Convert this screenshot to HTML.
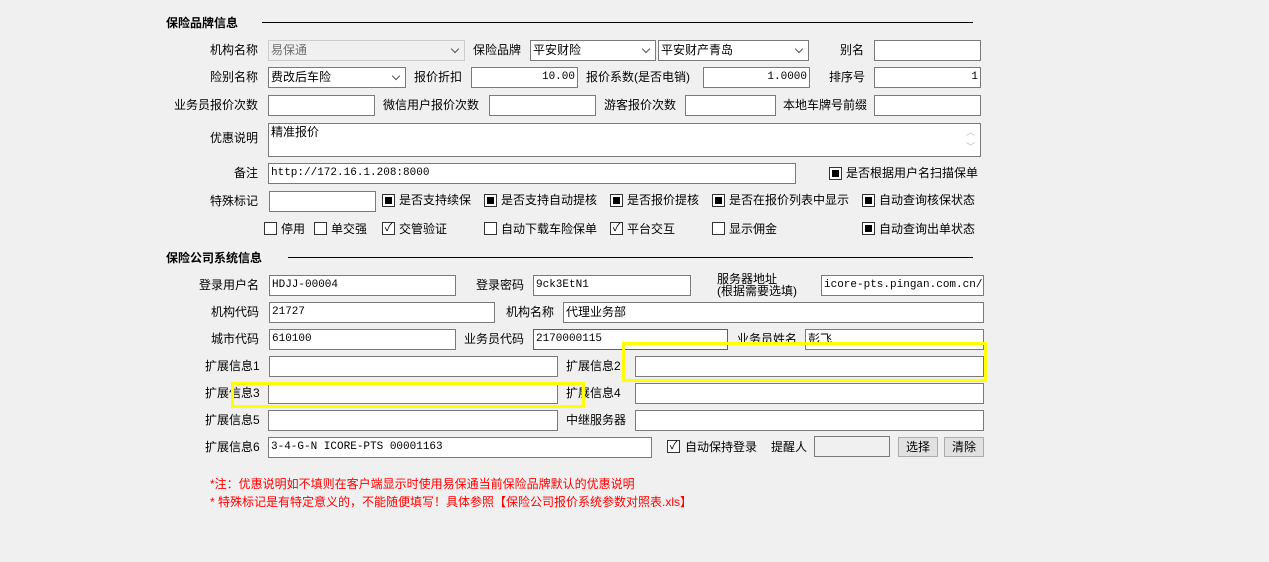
<!DOCTYPE html>
<html><head><meta charset="utf-8"><style>
body{margin:0;width:1269px;height:562px;background:#f0f0f0;position:relative;overflow:hidden;font-family:"Liberation Sans","Noto Sans CJK SC",sans-serif;font-size:12px;color:#000}
div{position:absolute;box-sizing:border-box}
.l{line-height:14px;white-space:nowrap}
.i{background:#fff;border:1px solid #7a7a7a;height:21px;font-family:"Liberation Mono","Noto Sans CJK SC",monospace;font-size:11px;line-height:19px;padding:0 2px;white-space:nowrap;overflow:hidden}
.r{text-align:right}
.h{font-weight:bold;font-size:12px;line-height:14px}
.hr{height:1px;background:#000}
.cb{width:13px;height:13px;border:1px solid #333;background:#fff}
.cb.f::after{content:"";position:absolute;left:2px;top:2px;width:7px;height:7px;background:#000}
.dd::after{content:"";position:absolute;right:6px;top:5px;width:5px;height:5px;border-right:1px solid #555;border-bottom:1px solid #555;transform:rotate(45deg)}
.y{border:3px solid #ffff00}
.btn{background:#e1e1e1;border:1px solid #adadad;height:20px;line-height:18px;text-align:center}
.red{color:#f00}
</style></head><body>
<div class="h" style="left:166px;top:16px">保险品牌信息</div>
<div class="hr" style="left:262px;top:22px;width:711px"></div>

<div class="l" style="left:210px;top:43px">机构名称</div>
<div class="i dd" style="left:268px;top:40px;width:197px;background:#f0f0f0;border-color:#ccc;color:#6d6d6d;font-family:'Liberation Sans','Noto Sans CJK SC',sans-serif;font-size:12px">易保通</div>
<div class="l" style="left:473px;top:43px">保险品牌</div>
<div class="i dd" style="left:530px;top:40px;width:126px;font-family:'Liberation Sans','Noto Sans CJK SC',sans-serif;font-size:12px">平安财险</div>
<div class="i dd" style="left:658px;top:40px;width:151px;font-family:'Liberation Sans','Noto Sans CJK SC',sans-serif;font-size:12px">平安财产青岛</div>
<div class="l" style="left:840px;top:43px">别名</div>
<div class="i" style="left:874px;top:40px;width:107px"></div>

<div class="l" style="left:210px;top:70px">险别名称</div>
<div class="i dd" style="left:268px;top:67px;width:138px;font-family:'Liberation Sans','Noto Sans CJK SC',sans-serif;font-size:12px">费改后车险</div>
<div class="l" style="left:414px;top:70px">报价折扣</div>
<div class="i r" style="left:471px;top:67px;width:107px">10.00</div>
<div class="l" style="left:586px;top:70px">报价系数(是否电销)</div>
<div class="i r" style="left:703px;top:67px;width:107px">1.0000</div>
<div class="l" style="left:829px;top:70px">排序号</div>
<div class="i r" style="left:874px;top:67px;width:107px">1</div>

<div class="l" style="left:174px;top:98px">业务员报价次数</div>
<div class="i" style="left:268px;top:95px;width:107px"></div>
<div class="l" style="left:383px;top:98px">微信用户报价次数</div>
<div class="i" style="left:489px;top:95px;width:107px"></div>
<div class="l" style="left:604px;top:98px">游客报价次数</div>
<div class="i" style="left:685px;top:95px;width:91px"></div>
<div class="l" style="left:783px;top:98px">本地车牌号前缀</div>
<div class="i" style="left:874px;top:95px;width:107px"></div>

<div class="l" style="left:210px;top:131px">优惠说明</div>
<div class="i" style="left:268px;top:123px;width:713px;height:34px;font-family:'Liberation Sans','Noto Sans CJK SC',sans-serif;font-size:12px;line-height:16px">精准报价</div>
<div class="l" style="left:966px;top:125px;color:#bbb;font-size:9px;line-height:15px">︿<br>﹀</div>

<div class="l" style="left:234px;top:166px">备注</div>
<div class="i" style="left:268px;top:163px;width:528px">http://172.16.1.208:8000</div>
<div class="cb f" style="left:829px;top:167px"></div>
<div class="l" style="left:846px;top:166px">是否根据用户名扫描保单</div>

<div class="l" style="left:210px;top:194px">特殊标记</div>
<div class="i" style="left:269px;top:191px;width:107px"></div>
<div class="cb f" style="left:382px;top:194px"></div><div class="l" style="left:399px;top:193px">是否支持续保</div>
<div class="cb f" style="left:484px;top:194px"></div><div class="l" style="left:501px;top:193px">是否支持自动提核</div>
<div class="cb f" style="left:610px;top:194px"></div><div class="l" style="left:627px;top:193px">是否报价提核</div>
<div class="cb f" style="left:712px;top:194px"></div><div class="l" style="left:729px;top:193px">是否在报价列表中显示</div>
<div class="cb f" style="left:862px;top:194px"></div><div class="l" style="left:879px;top:193px">自动查询核保状态</div>

<div class="cb" style="left:264px;top:222px"></div><div class="l" style="left:281px;top:222px">停用</div>
<div class="cb" style="left:314px;top:222px"></div><div class="l" style="left:331px;top:222px">单交强</div>
<div class="cb" style="left:382px;top:222px;font-size:11px;line-height:11px;text-align:center">✓</div><div class="l" style="left:399px;top:222px">交管验证</div>
<div class="cb" style="left:484px;top:222px"></div><div class="l" style="left:501px;top:222px">自动下载车险保单</div>
<div class="cb" style="left:610px;top:222px;font-size:11px;line-height:11px;text-align:center">✓</div><div class="l" style="left:627px;top:222px">平台交互</div>
<div class="cb" style="left:712px;top:222px"></div><div class="l" style="left:729px;top:222px">显示佣金</div>
<div class="cb f" style="left:862px;top:222px"></div><div class="l" style="left:879px;top:222px">自动查询出单状态</div>

<div class="h" style="left:166px;top:251px">保险公司系统信息</div>
<div class="hr" style="left:288px;top:257px;width:685px"></div>

<div class="l" style="left:199px;top:278px">登录用户名</div>
<div class="i" style="left:269px;top:275px;width:187px">HDJJ-00004</div>
<div class="l" style="left:476px;top:278px">登录密码</div>
<div class="i" style="left:533px;top:275px;width:158px">9ck3EtN1</div>
<div class="l" style="left:717px;top:273px;line-height:12px">服务器地址<br>(根据需要选填)</div>
<div class="i" style="left:821px;top:275px;width:163px">icore-pts.pingan.com.cn/ebusiness</div>

<div class="l" style="left:211px;top:305px">机构代码</div>
<div class="i" style="left:269px;top:302px;width:226px">21727</div>
<div class="l" style="left:506px;top:305px">机构名称</div>
<div class="i" style="left:563px;top:302px;width:421px;font-family:'Liberation Sans','Noto Sans CJK SC',sans-serif;font-size:12px">代理业务部</div>

<div class="l" style="left:211px;top:332px">城市代码</div>
<div class="i" style="left:269px;top:329px;width:187px">610100</div>
<div class="l" style="left:464px;top:332px">业务员代码</div>
<div class="i" style="left:533px;top:329px;width:195px;border-color:#0078d7">2170000115</div>
<div class="l" style="left:737px;top:332px">业务员姓名</div>
<div class="i" style="left:805px;top:329px;width:179px;font-family:'Liberation Sans','Noto Sans CJK SC',sans-serif;font-size:12px">彭飞</div>

<div class="l" style="left:205px;top:359px">扩展信息1</div>
<div class="i" style="left:269px;top:356px;width:289px"></div>
<div class="l" style="left:566px;top:359px">扩展信息2</div>
<div class="i" style="left:635px;top:356px;width:349px"></div>

<div class="l" style="left:205px;top:386px">扩展信息3</div>
<div class="i" style="left:268px;top:383px;width:290px"></div>
<div class="l" style="left:566px;top:386px">扩展信息4</div>
<div class="i" style="left:635px;top:383px;width:349px"></div>

<div class="l" style="left:205px;top:413px">扩展信息5</div>
<div class="i" style="left:268px;top:410px;width:290px"></div>
<div class="l" style="left:566px;top:413px">中继服务器</div>
<div class="i" style="left:635px;top:410px;width:349px"></div>

<div class="l" style="left:205px;top:440px">扩展信息6</div>
<div class="i" style="left:268px;top:437px;width:384px">3-4-G-N ICORE-PTS 00001163</div>
<div class="cb" style="left:667px;top:440px;font-size:11px;line-height:11px;text-align:center">✓</div><div class="l" style="left:685px;top:440px">自动保持登录</div>
<div class="l" style="left:771px;top:440px">提醒人</div>
<div class="i" style="left:814px;top:436px;width:76px;background:#f0f0f0"></div>
<div class="btn" style="left:898px;top:437px;width:40px">选择</div>
<div class="btn" style="left:944px;top:437px;width:40px">清除</div>

<div class="y" style="left:622px;top:342px;width:365px;height:40px"></div>
<div class="y" style="left:231px;top:382px;width:354px;height:26px"></div>

<div class="l red" style="left:210px;top:477px">*注：优惠说明如不填则在客户端显示时使用易保通当前保险品牌默认的优惠说明</div>
<div class="l red" style="left:210px;top:495px">* 特殊标记是有特定意义的，不能随便填写！具体参照【保险公司报价系统参数对照表.xls】</div>
</body></html>
